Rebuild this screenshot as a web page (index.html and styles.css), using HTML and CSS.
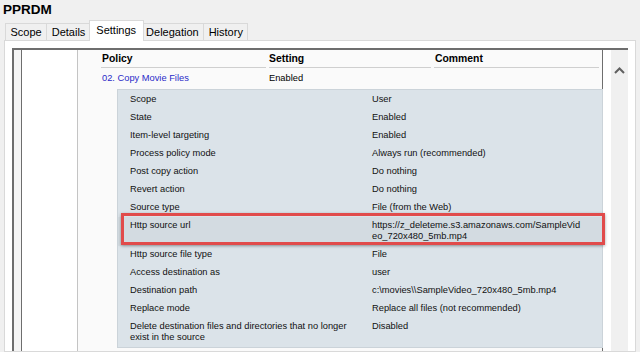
FILE: index.html
```html
<!DOCTYPE html>
<html>
<head>
<meta charset="utf-8">
<link rel="stylesheet" href="styles.css">
</head>
<body>
<div class="title">PPRDM</div>
<div class="tabs">
  <div class="tab">Scope</div>
  <div class="tab">Details</div>
  <div class="tab active">Settings</div>
  <div class="tab">Delegation</div>
  <div class="tab">History</div>
</div>
<div class="panel">
  <div class="frame">
    <div class="grid">
      <div class="gutter"></div>
      <div class="blank"></div>
      <div class="content">
        <div class="head">
          <div class="c1 pad">Policy</div>
          <div class="c2">Setting</div>
          <div class="c3 pad">Comment</div>
        </div>
        <div class="policy">
          <div class="c1 pad link">02. Copy Movie Files</div>
          <div class="c2">Enabled</div>
        </div>
        <div class="details">
          <div class="row"><span>Scope</span><span>User</span></div>
          <div class="row"><span>State</span><span>Enabled</span></div>
          <div class="row"><span>Item-level targeting</span><span>Enabled</span></div>
          <div class="row"><span>Process policy mode</span><span>Always run (recommended)</span></div>
          <div class="row"><span>Post copy action</span><span>Do nothing</span></div>
          <div class="row"><span>Revert action</span><span>Do nothing</span></div>
          <div class="row"><span>Source type</span><span>File (from the Web)</span></div>
          <div class="row hl"><span>Http source url</span><span>https://z_deleteme.s3.amazonaws.com/SampleVid<br>eo_720x480_5mb.mp4</span></div>
          <div class="row"><span>Http source file type</span><span>File</span></div>
          <div class="row"><span>Access destination as</span><span>user</span></div>
          <div class="row"><span>Destination path</span><span>c:\movies\\SampleVideo_720x480_5mb.mp4</span></div>
          <div class="row"><span>Replace mode</span><span>Replace all files (not recommended)</span></div>
          <div class="row"><span>Delete destination files and directories that no longer<br>exist in the source</span><span>Disabled</span></div>
        </div>
      </div>
    </div>
    <div class="spacer"></div>
    <div class="vscroll">
      <svg width="11" height="7" viewBox="0 0 11 7"><path d="M1 6 L5.5 1.5 L10 6" fill="none" stroke="#606060" stroke-width="2"/></svg>
    </div>
  </div>
</div>
</body>
</html>
```
FILE: styles.css
```css
body {
  margin: 0;
  background: #f0f0f0;
  font-family: "Liberation Sans", Arial, sans-serif;
  color: #000;
  height: 352px;
  overflow: hidden;
  display: flex;
  flex-direction: column;
}
.title {
  height: 20px;
  line-height: 19px;
  font-size: 13.5px;
  font-weight: bold;
  padding-left: 3px;
}
.tabs {
  display: flex;
  align-items: flex-start;
  height: 21px;
  padding-left: 5px;
  margin-bottom: -1px;
  position: relative;
  z-index: 1;
}
.tab {
  margin-top: 3px;
  height: 17px;
  box-sizing: border-box;
  border: 1px solid #d9d9d9;
  border-bottom: none;
  padding: 0 4.5px;
  font-size: 11px;
  line-height: 16px;
  background: #f0f0f0;
}
.tab + .tab {
  margin-left: -1px;
}
.tab.active {
  margin-top: 0;
  height: 21px;
  background: #fff;
  line-height: 19px;
  padding: 0 6.5px;
  margin-left: -2px;
  margin-right: -2px;
  position: relative;
  z-index: 2;
}
.panel {
  flex: 1;
  margin: 0 4px;
  background: #fff;
  border: 1px solid #d9d9d9;
  padding: 7px 7px 0;
  display: flex;
  flex-direction: column;
  min-height: 0;
}
.frame {
  flex: 1;
  display: flex;
  border-top: 2px solid #6e6e6e;
  border-left: 2px solid #6e6e6e;
}
.grid {
  display: flex;
  border-right: 1px solid #6e6e6e;
}
.gutter {
  width: 7px;
  background: #f5f5f5;
  border-right: 1px solid #6e6e6e;
}
.blank {
  width: 55px;
  background: #fff;
  border-right: 1px solid #c4c4c4;
}
.content {
  width: 524px;
  background: #fafafa;
}
.spacer {
  width: 8px;
}
.vscroll {
  width: 17px;
  background: #f0f0f0;
  display: flex;
  justify-content: center;
  align-items: flex-start;
}
.vscroll svg {
  margin-top: 17px;
}
.head {
  display: flex;
  padding-left: 23px;
  height: 18px;
  font-weight: bold;
  font-size: 10.4px;
  line-height: 17px;
}
.head > div {
  border-bottom: 1px solid #cfcfcf;
}
.c1 { width: 165px; }
.c2 { width: 162px; margin-left: 3px; }
.c3 { width: 165px; margin-left: 3px; }
.pad { box-sizing: border-box; padding-left: 1px; }
.policy {
  display: flex;
  padding-left: 23px;
  height: 21px;
  line-height: 21px;
  font-size: 9.3px;
}
.link {
  color: #2a2ac8;
}
.details {
  margin-left: 39px;
  margin-right: -1px;
  background: #dbe3e9;
  border: 1px solid #cbd3d9;
  padding-top: 1px;
  font-size: 9.3px;
  color: #111;
}
.row {
  display: grid;
  grid-template-columns: 242px 1fr;
  padding: 3px 0 4px 12px;
  line-height: 11px;
  white-space: nowrap;
}
.row.hl {
  position: relative;
  background: #d3dbe1;
}
.row.hl::after {
  content: "";
  position: absolute;
  top: -4px;
  left: 3px;
  right: -3px;
  bottom: 1px;
  border: 3px solid #e14b4b;
  box-shadow: 0 1px 3px rgba(0, 0, 0, 0.35);
}
```
